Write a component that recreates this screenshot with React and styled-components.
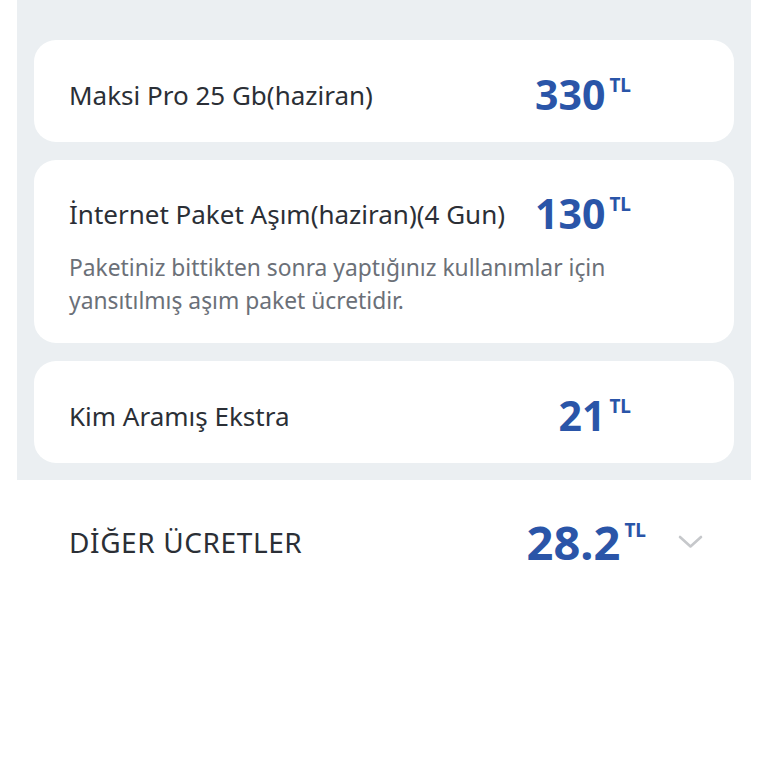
import styled, { createGlobalStyle } from "styled-components";

const GlobalStyle = createGlobalStyle`
  html, body {
    margin: 0;
    padding: 0;
    background: #ffffff;
  }
  body {
    font-family: "Noto Sans", "Open Sans", sans-serif;
    color: #2b2f36;
  }
`;

const Page = styled.div`
  width: 768px;
  min-height: 768px;
  background: #ffffff;
`;

const Panel = styled.div`
  margin: 0 17px;
  padding: 40px 17px 17px;
  background: #ebeff2;
  display: flex;
  flex-direction: column;
  gap: 18px;
`;

const Card = styled.div`
  background: #ffffff;
  border-radius: 22px;
  padding: ${(p) => (p.$tall ? "33px 103px 26px 35px" : "7px 103px 0 35px")};
  height: ${(p) => (p.$tall ? "auto" : "102px")};
  box-sizing: border-box;
  display: flex;
  flex-direction: column;
  justify-content: center;
`;

const Row = styled.div`
  display: flex;
  align-items: center;
  justify-content: space-between;
  gap: 20px;
  height: 41px;
`;

const Title = styled.div`
  font-size: 26px;
  font-weight: 400;
  color: #2b2f36;
  white-space: nowrap;
`;

const Desc = styled.div`
  margin-top: 17px;
  max-width: 600px;
  font-size: 22.8px;
  line-height: 33px;
  color: #6b7078;
`;

const Price = styled.div`
  display: flex;
  align-items: flex-start;
  color: #2a55a8;
  font-weight: 700;
  white-space: nowrap;
`;

const Amount = styled.span`
  font-size: ${(p) => (p.$big ? "47px" : "41px")};
  line-height: 1;
`;

const Currency = styled.span`
  font-size: 19px;
  line-height: 1;
  margin-left: 4px;
  margin-top: 2px;
`;

const Footer = styled.div`
  display: flex;
  align-items: center;
  padding: 0 65px 0 69px;
  height: 124px;
`;

const FooterTitle = styled.div`
  flex: 1;
  font-size: 28px;
  font-weight: 400;
  letter-spacing: 0.6px;
  color: #2b2f36;
`;

const Chevron = styled.svg`
  margin-left: 32px;
  width: 25px;
  height: 14px;
`;

const items = [
  { title: "Maksi Pro 25 Gb(haziran)", amount: "330" },
  {
    title: "İnternet Paket Aşım(haziran)(4 Gun)",
    amount: "130",
    desc: "Paketiniz bittikten sonra yaptığınız kullanımlar için yansıtılmış aşım paket ücretidir.",
  },
  { title: "Kim Aramış Ekstra", amount: "21" },
];

const App = () => (
  <Page>
    <GlobalStyle />
    <Panel>
      {items.map((it) => (
        <Card key={it.title} $tall={!!it.desc}>
          <Row>
            <Title>{it.title}</Title>
            <Price>
              <Amount>{it.amount}</Amount>
              <Currency>TL</Currency>
            </Price>
          </Row>
          {it.desc && <Desc>{it.desc}</Desc>}
        </Card>
      ))}
    </Panel>
    <Footer>
      <FooterTitle>DİĞER ÜCRETLER</FooterTitle>
      <Price>
        <Amount $big>28.2</Amount>
        <Currency>TL</Currency>
      </Price>
      <Chevron viewBox="0 0 25 14">
        <path
          d="M2 2 L12.5 11.5 L23 2"
          fill="none"
          stroke="#c6c8cb"
          strokeWidth="2.6"
          strokeLinecap="round"
          strokeLinejoin="round"
        />
      </Chevron>
    </Footer>
  </Page>
);

export default App;
